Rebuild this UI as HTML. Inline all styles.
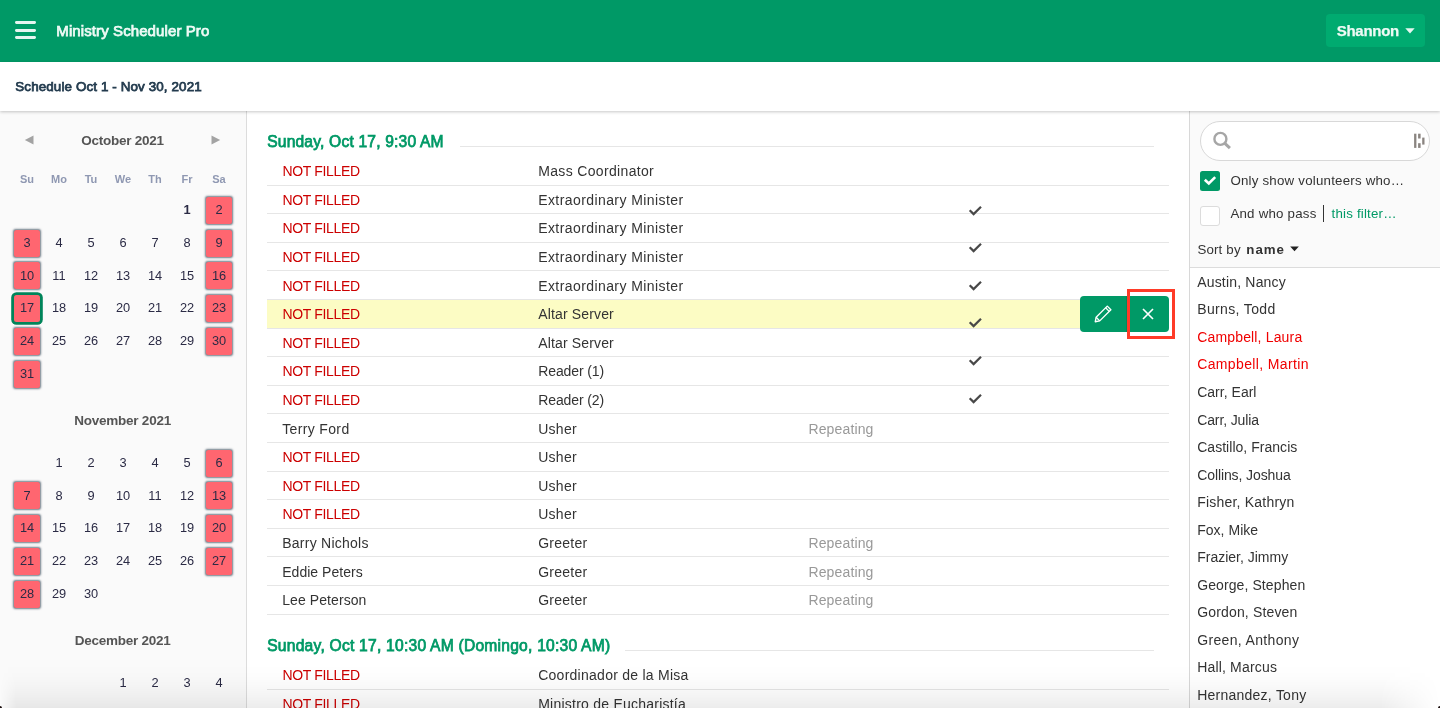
<!DOCTYPE html>
<html lang="en"><head><meta charset="utf-8"><title>Ministry Scheduler Pro</title>
<style>
html,body{margin:0;padding:0}
body{width:1440px;height:708px;overflow:hidden;position:relative;background:#fff;font-family:'Liberation Sans',sans-serif;color:#333}
.t{position:absolute;white-space:pre;line-height:20px;height:20px}
.abs{position:absolute}
#hdr{left:0;top:0;width:1440px;height:62px;background:#009966}
#sub{left:0;top:62px;width:1440px;height:49px;background:#fff;box-shadow:0 1px 3px rgba(0,0,0,.22);z-index:5}
#left{left:0;top:111px;width:246px;height:597px;background:#fafafa;border-right:1px solid #dcdcdc}
#right{left:1189px;top:111px;width:251px;height:597px;background:#fafafa;border-left:1px solid #d8d8d8;box-sizing:border-box}
#rlist{left:1190px;top:267px;width:250px;height:441px;background:#fff;border-top:1px solid #dcdcdc;box-sizing:border-box}
.hl{position:absolute;height:1px;background:#e6e6e6}
.cell{position:absolute;width:26.4px;height:27px;border-radius:2.5px;background:#ff6670;box-shadow:0 0 2px .15px rgba(55,75,90,.72)}
.d{position:absolute;width:32px;text-align:center;font-size:12.8px;line-height:16px;height:16px;color:#2b2b45}
.wd{position:absolute;width:32px;text-align:center;font-size:11px;font-weight:700;line-height:14px;color:#8f98b2}
.mt{position:absolute;left:0;width:245.4px;text-align:center;font-size:13.5px;font-weight:700;line-height:16px;height:16px;color:#555;white-space:pre}
#app{position:absolute;left:0;top:0;width:1440px;height:708px;overflow:hidden;background:#fff;will-change:transform}
</style></head><body><div id="app">

<div id="hdr" class="abs"></div>
<div class="abs" style="left:15px;top:21.1px;width:21px;height:2.8px;background:rgba(255,255,255,.9);border-radius:1.4px"></div>
<div class="abs" style="left:15px;top:28.8px;width:21px;height:2.8px;background:rgba(255,255,255,.9);border-radius:1.4px"></div>
<div class="abs" style="left:15px;top:36.2px;width:21px;height:2.8px;background:rgba(255,255,255,.9);border-radius:1.4px"></div>
<div class="t" style="left:56.3px;top:20.80px;font-size:15px;font-weight:400;color:#eefaf5;letter-spacing:0.1px;-webkit-text-stroke:0.75px #eefaf5;">Ministry Scheduler Pro</div>
<div class="abs" style="left:1326px;top:14px;width:99px;height:33px;border-radius:4px;background:#00ab70"></div>
<div class="t" style="left:1336.8px;top:20.70px;font-size:15px;font-weight:700;color:#eefaf5;letter-spacing:-0.295px;-webkit-text-stroke:0.25px #eefaf5;">Shannon</div>
<svg class="abs" style="left:1405px;top:28px" width="10" height="6" viewBox="0 0 10 6"><path d="M0.3 0.3H9.7L5 5.6Z" fill="rgba(255,255,255,.9)"/></svg>
<div id="sub" class="abs"></div>
<div class="t" style="left:15.3px;top:76.80px;font-size:13.4px;font-weight:400;color:#233b4e;letter-spacing:0.117px;z-index:6;-webkit-text-stroke:0.75px #233b4e;">Schedule Oct 1 - Nov 30, 2021</div>
<div id="left" class="abs"></div>
<div class="mt" style="top:132.9px;letter-spacing:-0.25px;text-indent:-0.25px">October 2021</div>
<svg class="abs" style="left:24px;top:135.3px" width="10" height="10" viewBox="0 0 10 10"><path d="M9.5 0.5V9.5L0.8 5Z" fill="#a3a3a3"/></svg>
<svg class="abs" style="left:211px;top:135.3px" width="10" height="10" viewBox="0 0 10 10"><path d="M0.5 0.5V9.5L9.2 5Z" fill="#a3a3a3"/></svg>
<div class="wd" style="left:11px;top:172.3px">Su</div>
<div class="wd" style="left:43px;top:172.3px">Mo</div>
<div class="wd" style="left:75px;top:172.3px">Tu</div>
<div class="wd" style="left:107px;top:172.3px">We</div>
<div class="wd" style="left:139px;top:172.3px">Th</div>
<div class="wd" style="left:171px;top:172.3px">Fr</div>
<div class="wd" style="left:203px;top:172.3px">Sa</div>
<div class="d" style="left:171px;top:202.30px;font-weight:700">1</div>
<div class="cell" style="left:205.8px;top:197.00px"></div>
<div class="d" style="left:203px;top:202.30px">2</div>
<div class="cell" style="left:13.8px;top:229.73px"></div>
<div class="d" style="left:11px;top:235.03px">3</div>
<div class="d" style="left:43px;top:235.03px">4</div>
<div class="d" style="left:75px;top:235.03px">5</div>
<div class="d" style="left:107px;top:235.03px">6</div>
<div class="d" style="left:139px;top:235.03px">7</div>
<div class="d" style="left:171px;top:235.03px">8</div>
<div class="cell" style="left:205.8px;top:229.73px"></div>
<div class="d" style="left:203px;top:235.03px">9</div>
<div class="cell" style="left:13.8px;top:262.46px"></div>
<div class="d" style="left:11px;top:267.76px">10</div>
<div class="d" style="left:43px;top:267.76px">11</div>
<div class="d" style="left:75px;top:267.76px">12</div>
<div class="d" style="left:107px;top:267.76px">13</div>
<div class="d" style="left:139px;top:267.76px">14</div>
<div class="d" style="left:171px;top:267.76px">15</div>
<div class="cell" style="left:205.8px;top:262.46px"></div>
<div class="d" style="left:203px;top:267.76px">16</div>
<div class="cell" style="left:13.8px;top:295.19px;box-shadow:0 0 0 2.8px #00845a;border-radius:2.5px"></div>
<div class="d" style="left:11px;top:300.49px">17</div>
<div class="d" style="left:43px;top:300.49px">18</div>
<div class="d" style="left:75px;top:300.49px">19</div>
<div class="d" style="left:107px;top:300.49px">20</div>
<div class="d" style="left:139px;top:300.49px">21</div>
<div class="d" style="left:171px;top:300.49px">22</div>
<div class="cell" style="left:205.8px;top:295.19px"></div>
<div class="d" style="left:203px;top:300.49px">23</div>
<div class="cell" style="left:13.8px;top:327.92px"></div>
<div class="d" style="left:11px;top:333.22px">24</div>
<div class="d" style="left:43px;top:333.22px">25</div>
<div class="d" style="left:75px;top:333.22px">26</div>
<div class="d" style="left:107px;top:333.22px">27</div>
<div class="d" style="left:139px;top:333.22px">28</div>
<div class="d" style="left:171px;top:333.22px">29</div>
<div class="cell" style="left:205.8px;top:327.92px"></div>
<div class="d" style="left:203px;top:333.22px">30</div>
<div class="cell" style="left:13.8px;top:360.65px"></div>
<div class="d" style="left:11px;top:365.95px">31</div>
<div class="mt" style="top:412.9px;letter-spacing:-0.234px;text-indent:-0.234px">November 2021</div>
<div class="d" style="left:43px;top:455.00px">1</div>
<div class="d" style="left:75px;top:455.00px">2</div>
<div class="d" style="left:107px;top:455.00px">3</div>
<div class="d" style="left:139px;top:455.00px">4</div>
<div class="d" style="left:171px;top:455.00px">5</div>
<div class="cell" style="left:205.8px;top:449.70px"></div>
<div class="d" style="left:203px;top:455.00px">6</div>
<div class="cell" style="left:13.8px;top:482.43px"></div>
<div class="d" style="left:11px;top:487.73px">7</div>
<div class="d" style="left:43px;top:487.73px">8</div>
<div class="d" style="left:75px;top:487.73px">9</div>
<div class="d" style="left:107px;top:487.73px">10</div>
<div class="d" style="left:139px;top:487.73px">11</div>
<div class="d" style="left:171px;top:487.73px">12</div>
<div class="cell" style="left:205.8px;top:482.43px"></div>
<div class="d" style="left:203px;top:487.73px">13</div>
<div class="cell" style="left:13.8px;top:515.16px"></div>
<div class="d" style="left:11px;top:520.46px">14</div>
<div class="d" style="left:43px;top:520.46px">15</div>
<div class="d" style="left:75px;top:520.46px">16</div>
<div class="d" style="left:107px;top:520.46px">17</div>
<div class="d" style="left:139px;top:520.46px">18</div>
<div class="d" style="left:171px;top:520.46px">19</div>
<div class="cell" style="left:205.8px;top:515.16px"></div>
<div class="d" style="left:203px;top:520.46px">20</div>
<div class="cell" style="left:13.8px;top:547.89px"></div>
<div class="d" style="left:11px;top:553.19px">21</div>
<div class="d" style="left:43px;top:553.19px">22</div>
<div class="d" style="left:75px;top:553.19px">23</div>
<div class="d" style="left:107px;top:553.19px">24</div>
<div class="d" style="left:139px;top:553.19px">25</div>
<div class="d" style="left:171px;top:553.19px">26</div>
<div class="cell" style="left:205.8px;top:547.89px"></div>
<div class="d" style="left:203px;top:553.19px">27</div>
<div class="cell" style="left:13.8px;top:580.62px"></div>
<div class="d" style="left:11px;top:585.92px">28</div>
<div class="d" style="left:43px;top:585.92px">29</div>
<div class="d" style="left:75px;top:585.92px">30</div>
<div class="mt" style="top:632.9px;letter-spacing:-0.265px;text-indent:-0.265px">December 2021</div>
<div class="d" style="left:107px;top:675.00px">1</div>
<div class="d" style="left:139px;top:675.00px">2</div>
<div class="d" style="left:171px;top:675.00px">3</div>
<div class="d" style="left:203px;top:675.00px">4</div>
<div class="t" style="left:267.2px;top:132.30px;font-size:15.6px;font-weight:400;color:#009966;letter-spacing:0.19px;-webkit-text-stroke:0.75px #009966;">Sunday, Oct 17, 9:30 AM</div>
<div class="hl" style="left:460px;top:146px;width:694px"></div>
<div class="hl" style="left:267px;top:185px;width:902px"></div>
<div class="t" style="left:282.5px;top:161.10px;font-size:14px;font-weight:400;color:#cc0000;letter-spacing:-0.34px;">NOT FILLED</div>
<div class="t" style="left:538.2px;top:161.10px;font-size:14px;font-weight:400;color:#333;letter-spacing:0.34px;">Mass Coordinator</div>
<div class="hl" style="left:267px;top:213px;width:902px"></div>
<div class="t" style="left:282.5px;top:189.70px;font-size:14px;font-weight:400;color:#cc0000;letter-spacing:-0.34px;">NOT FILLED</div>
<div class="t" style="left:538.2px;top:189.70px;font-size:14px;font-weight:400;color:#333;letter-spacing:0.416px;">Extraordinary Minister</div>
<div class="hl" style="left:267px;top:242px;width:902px"></div>
<div class="t" style="left:282.5px;top:218.30px;font-size:14px;font-weight:400;color:#cc0000;letter-spacing:-0.34px;">NOT FILLED</div>
<div class="t" style="left:538.2px;top:218.30px;font-size:14px;font-weight:400;color:#333;letter-spacing:0.416px;">Extraordinary Minister</div>
<div class="hl" style="left:267px;top:270px;width:902px"></div>
<div class="t" style="left:282.5px;top:246.90px;font-size:14px;font-weight:400;color:#cc0000;letter-spacing:-0.34px;">NOT FILLED</div>
<div class="t" style="left:538.2px;top:246.90px;font-size:14px;font-weight:400;color:#333;letter-spacing:0.416px;">Extraordinary Minister</div>
<div class="hl" style="left:267px;top:299px;width:902px"></div>
<div class="t" style="left:282.5px;top:275.50px;font-size:14px;font-weight:400;color:#cc0000;letter-spacing:-0.34px;">NOT FILLED</div>
<div class="t" style="left:538.2px;top:275.50px;font-size:14px;font-weight:400;color:#333;letter-spacing:0.416px;">Extraordinary Minister</div>
<div class="abs" style="left:267px;top:300px;width:902px;height:28px;background:#fcfcc4"></div>
<div class="hl" style="left:267px;top:328px;width:902px"></div>
<div class="t" style="left:282.5px;top:304.10px;font-size:14px;font-weight:400;color:#cc0000;letter-spacing:-0.34px;">NOT FILLED</div>
<div class="t" style="left:538.2px;top:304.10px;font-size:14px;font-weight:400;color:#333;letter-spacing:0.153px;">Altar Server</div>
<div class="hl" style="left:267px;top:356px;width:902px"></div>
<div class="t" style="left:282.5px;top:332.70px;font-size:14px;font-weight:400;color:#cc0000;letter-spacing:-0.34px;">NOT FILLED</div>
<div class="t" style="left:538.2px;top:332.70px;font-size:14px;font-weight:400;color:#333;letter-spacing:0.153px;">Altar Server</div>
<div class="hl" style="left:267px;top:385px;width:902px"></div>
<div class="t" style="left:282.5px;top:361.30px;font-size:14px;font-weight:400;color:#cc0000;letter-spacing:-0.34px;">NOT FILLED</div>
<div class="t" style="left:538.2px;top:361.30px;font-size:14px;font-weight:400;color:#333;letter-spacing:-0.102px;">Reader (1)</div>
<div class="hl" style="left:267px;top:413px;width:902px"></div>
<div class="t" style="left:282.5px;top:389.90px;font-size:14px;font-weight:400;color:#cc0000;letter-spacing:-0.34px;">NOT FILLED</div>
<div class="t" style="left:538.2px;top:389.90px;font-size:14px;font-weight:400;color:#333;letter-spacing:-0.102px;">Reader (2)</div>
<div class="hl" style="left:267px;top:442px;width:902px"></div>
<div class="t" style="left:282.2px;top:418.50px;font-size:14px;font-weight:400;color:#333;letter-spacing:0.356px;">Terry Ford</div>
<div class="t" style="left:538.2px;top:418.50px;font-size:14px;font-weight:400;color:#333;letter-spacing:0.285px;">Usher</div>
<div class="t" style="left:808.4px;top:418.50px;font-size:14px;font-weight:400;color:#999;letter-spacing:0.146px;">Repeating</div>
<div class="hl" style="left:267px;top:471px;width:902px"></div>
<div class="t" style="left:282.5px;top:447.10px;font-size:14px;font-weight:400;color:#cc0000;letter-spacing:-0.34px;">NOT FILLED</div>
<div class="t" style="left:538.2px;top:447.10px;font-size:14px;font-weight:400;color:#333;letter-spacing:0.285px;">Usher</div>
<div class="hl" style="left:267px;top:499px;width:902px"></div>
<div class="t" style="left:282.5px;top:475.70px;font-size:14px;font-weight:400;color:#cc0000;letter-spacing:-0.34px;">NOT FILLED</div>
<div class="t" style="left:538.2px;top:475.70px;font-size:14px;font-weight:400;color:#333;letter-spacing:0.285px;">Usher</div>
<div class="hl" style="left:267px;top:528px;width:902px"></div>
<div class="t" style="left:282.5px;top:504.30px;font-size:14px;font-weight:400;color:#cc0000;letter-spacing:-0.34px;">NOT FILLED</div>
<div class="t" style="left:538.2px;top:504.30px;font-size:14px;font-weight:400;color:#333;letter-spacing:0.285px;">Usher</div>
<div class="hl" style="left:267px;top:556px;width:902px"></div>
<div class="t" style="left:282.2px;top:532.90px;font-size:14px;font-weight:400;color:#333;letter-spacing:0.254px;">Barry Nichols</div>
<div class="t" style="left:538.2px;top:532.90px;font-size:14px;font-weight:400;color:#333;letter-spacing:0.239px;">Greeter</div>
<div class="t" style="left:808.4px;top:532.90px;font-size:14px;font-weight:400;color:#999;letter-spacing:0.146px;">Repeating</div>
<div class="hl" style="left:267px;top:585px;width:902px"></div>
<div class="t" style="left:282.2px;top:561.50px;font-size:14px;font-weight:400;color:#333;letter-spacing:0.039px;">Eddie Peters</div>
<div class="t" style="left:538.2px;top:561.50px;font-size:14px;font-weight:400;color:#333;letter-spacing:0.239px;">Greeter</div>
<div class="t" style="left:808.4px;top:561.50px;font-size:14px;font-weight:400;color:#999;letter-spacing:0.146px;">Repeating</div>
<div class="hl" style="left:267px;top:614px;width:902px"></div>
<div class="t" style="left:282.2px;top:590.10px;font-size:14px;font-weight:400;color:#333;letter-spacing:0.082px;">Lee Peterson</div>
<div class="t" style="left:538.2px;top:590.10px;font-size:14px;font-weight:400;color:#333;letter-spacing:0.239px;">Greeter</div>
<div class="t" style="left:808.4px;top:590.10px;font-size:14px;font-weight:400;color:#999;letter-spacing:0.146px;">Repeating</div>
<div class="t" style="left:267.2px;top:636.30px;font-size:15.6px;font-weight:400;color:#009966;letter-spacing:0.243px;-webkit-text-stroke:0.75px #009966;">Sunday, Oct 17, 10:30 AM (Domingo, 10:30 AM)</div>
<div class="hl" style="left:625px;top:650px;width:529px"></div>
<div class="hl" style="left:267px;top:689px;width:902px"></div>
<div class="t" style="left:282.5px;top:665.10px;font-size:14px;font-weight:400;color:#cc0000;letter-spacing:-0.34px;">NOT FILLED</div>
<div class="t" style="left:538.2px;top:665.10px;font-size:14px;font-weight:400;color:#333;letter-spacing:0.26px;">Coordinador de la Misa</div>
<div class="hl" style="left:267px;top:717px;width:902px"></div>
<div class="t" style="left:282.5px;top:693.70px;font-size:14px;font-weight:400;color:#cc0000;letter-spacing:-0.34px;">NOT FILLED</div>
<div class="t" style="left:538.2px;top:693.70px;font-size:14px;font-weight:400;color:#333;letter-spacing:0.236px;">Ministro de Eucharistía</div>
<svg class="abs" style="left:968px;top:204.6px" width="15" height="12" viewBox="0 0 15 12"><path d="M1.7 5.2L5.6 9.1L13 1.7" fill="none" stroke="#484848" stroke-width="2.2"/></svg>
<svg class="abs" style="left:968px;top:242.2px" width="15" height="12" viewBox="0 0 15 12"><path d="M1.7 5.2L5.6 9.1L13 1.7" fill="none" stroke="#484848" stroke-width="2.2"/></svg>
<svg class="abs" style="left:968px;top:279.8px" width="15" height="12" viewBox="0 0 15 12"><path d="M1.7 5.2L5.6 9.1L13 1.7" fill="none" stroke="#484848" stroke-width="2.2"/></svg>
<svg class="abs" style="left:968px;top:317.4px" width="15" height="12" viewBox="0 0 15 12"><path d="M1.7 5.2L5.6 9.1L13 1.7" fill="none" stroke="#484848" stroke-width="2.2"/></svg>
<svg class="abs" style="left:968px;top:355.0px" width="15" height="12" viewBox="0 0 15 12"><path d="M1.7 5.2L5.6 9.1L13 1.7" fill="none" stroke="#484848" stroke-width="2.2"/></svg>
<svg class="abs" style="left:968px;top:392.6px" width="15" height="12" viewBox="0 0 15 12"><path d="M1.7 5.2L5.6 9.1L13 1.7" fill="none" stroke="#484848" stroke-width="2.2"/></svg>
<div class="abs" style="left:1080px;top:296px;width:89px;height:36px;border-radius:4px;background:#009966"></div>
<div class="abs" style="left:1126px;top:296px;width:1px;height:36px;background:#008a5c"></div>
<svg class="abs" style="left:1094.2px;top:304.2px" width="19" height="19" viewBox="0 0 18 18"><g fill="none" stroke="#fff" stroke-width="1.3" stroke-linejoin="round"><path d="M1.2 16.8L2 12.6L12.6 2L16 5.4L5.4 16Z"/><path d="M11 3.6L14.4 7"/><path d="M2 12.6L5.4 16"/></g></svg>
<svg class="abs" style="left:1142.4px;top:308px" width="12" height="12" viewBox="0 0 12 12"><path d="M1 1L11 11M11 1L1 11" stroke="#fff" stroke-width="1.65" fill="none"/></svg>
<div class="abs" style="left:1127px;top:289px;width:48px;height:50px;border:3px solid #ff3b28;box-sizing:border-box"></div>
<div id="right" class="abs"></div>
<div class="abs" style="left:1200.3px;top:121.2px;width:229.6px;height:39.4px;border-radius:20px;border:1px solid #d8d8d8;background:#fff;box-sizing:border-box"></div>
<svg class="abs" style="left:1212px;top:131px" width="20" height="20" viewBox="0 0 20 20"><circle cx="8.4" cy="7.9" r="6" fill="none" stroke="#a6a6a6" stroke-width="2.4"/><path d="M12.6 12.1L17.9 17.1" stroke="#a6a6a6" stroke-width="3" stroke-linecap="butt"/></svg>
<svg class="abs" style="left:1413px;top:132px" width="13" height="18" viewBox="0 0 13 18"><g fill="#8a8480"><rect x="1.1" y="1.7" width="2.3" height="14.2"/><rect x="5.1" y="1.7" width="2.5" height="4.8"/><rect x="5.1" y="11.2" width="2.5" height="4.7"/><rect x="9.2" y="5.6" width="2.3" height="7"/></g></svg>
<div class="abs" style="left:1200px;top:171px;width:20px;height:20px;border-radius:2.5px;background:#009966"></div>
<svg class="abs" style="left:1203px;top:174px" width="14" height="14" viewBox="0 0 14 14"><path d="M1.8 5.7L5.8 9.5L12.2 3.1" fill="none" stroke="#fff" stroke-width="2.6"/></svg>
<div class="t" style="left:1230.4px;top:170.90px;font-size:13.3px;font-weight:400;color:#333;letter-spacing:0.212px;">Only show volunteers who…</div>
<div class="abs" style="left:1200px;top:205.5px;width:20px;height:20px;border-radius:3px;background:#fff;border:1px solid #dcdcdc;box-sizing:border-box"></div>
<div class="t" style="left:1230.4px;top:204.00px;font-size:13.3px;font-weight:400;color:#333;letter-spacing:0.224px;">And who pass</div>
<div class="abs" style="left:1323px;top:205px;width:1px;height:17px;background:#333"></div>
<div class="t" style="left:1331.6px;top:204.00px;font-size:13.3px;font-weight:400;color:#009966;letter-spacing:0.19px;">this filter…</div>
<div class="t" style="left:1197.4px;top:240.00px;font-size:13.3px;font-weight:400;color:#333;letter-spacing:0.179px;">Sort by</div>
<div class="t" style="left:1246.3px;top:240.00px;font-size:13.3px;font-weight:700;color:#333;letter-spacing:0.983px;">name</div>
<svg class="abs" style="left:1289.5px;top:246px" width="9" height="6" viewBox="0 0 9 6"><path d="M0.2 0.4H8.8L4.5 5.2Z" fill="#222"/></svg>
<div id="rlist" class="abs"></div>
<div class="t" style="left:1197.2px;top:271.90px;font-size:14px;font-weight:400;color:#333;letter-spacing:0.185px;">Austin, Nancy</div>
<div class="t" style="left:1197.2px;top:299.43px;font-size:14px;font-weight:400;color:#333;letter-spacing:0.363px;">Burns, Todd</div>
<div class="t" style="left:1197.2px;top:326.96px;font-size:14px;font-weight:400;color:#f00000;letter-spacing:0.162px;">Campbell, Laura</div>
<div class="t" style="left:1197.2px;top:354.49px;font-size:14px;font-weight:400;color:#f00000;letter-spacing:0.365px;">Campbell, Martin</div>
<div class="t" style="left:1197.2px;top:382.02px;font-size:14px;font-weight:400;color:#333;letter-spacing:0.019px;">Carr, Earl</div>
<div class="t" style="left:1197.2px;top:409.55px;font-size:14px;font-weight:400;color:#333;letter-spacing:-0.113px;">Carr, Julia</div>
<div class="t" style="left:1197.2px;top:437.08px;font-size:14px;font-weight:400;color:#333;letter-spacing:0.032px;">Castillo, Francis</div>
<div class="t" style="left:1197.2px;top:464.61px;font-size:14px;font-weight:400;color:#333;letter-spacing:-0.103px;">Collins, Joshua</div>
<div class="t" style="left:1197.2px;top:492.14px;font-size:14px;font-weight:400;color:#333;letter-spacing:0.21px;">Fisher, Kathryn</div>
<div class="t" style="left:1197.2px;top:519.67px;font-size:14px;font-weight:400;color:#333;letter-spacing:0.027px;">Fox, Mike</div>
<div class="t" style="left:1197.2px;top:547.20px;font-size:14px;font-weight:400;color:#333;letter-spacing:0.0px;">Frazier, Jimmy</div>
<div class="t" style="left:1197.2px;top:574.73px;font-size:14px;font-weight:400;color:#333;letter-spacing:0.097px;">George, Stephen</div>
<div class="t" style="left:1197.2px;top:602.26px;font-size:14px;font-weight:400;color:#333;letter-spacing:0.157px;">Gordon, Steven</div>
<div class="t" style="left:1197.2px;top:629.79px;font-size:14px;font-weight:400;color:#333;letter-spacing:0.346px;">Green, Anthony</div>
<div class="t" style="left:1197.2px;top:657.32px;font-size:14px;font-weight:400;color:#333;letter-spacing:0.173px;">Hall, Marcus</div>
<div class="t" style="left:1197.2px;top:684.85px;font-size:14px;font-weight:400;color:#333;letter-spacing:0.243px;">Hernandez, Tony</div>
<div class="abs" style="left:0;top:664px;width:1440px;height:44px;background:linear-gradient(to bottom,rgba(0,0,0,0) 0,rgba(0,0,0,.008) 12px,rgba(0,0,0,.022) 22px,rgba(0,0,0,.042) 32px,rgba(0,0,0,.075) 44px);z-index:20;pointer-events:none;-webkit-mask-image:linear-gradient(to right,transparent 0,#000 16px,#000 1380px,transparent 1440px);mask-image:linear-gradient(to right,transparent 0,#000 16px,#000 1380px,transparent 1440px)"></div>
<div class="abs" style="left:-2.2px;top:705.8px;width:4.4px;height:4.4px;border-radius:50%;background:#1a0d0d;z-index:21"></div>
<div class="abs" style="left:1437.8px;top:705.8px;width:4.4px;height:4.4px;border-radius:50%;background:#1a0d0d;z-index:21"></div>
</div></body></html>
